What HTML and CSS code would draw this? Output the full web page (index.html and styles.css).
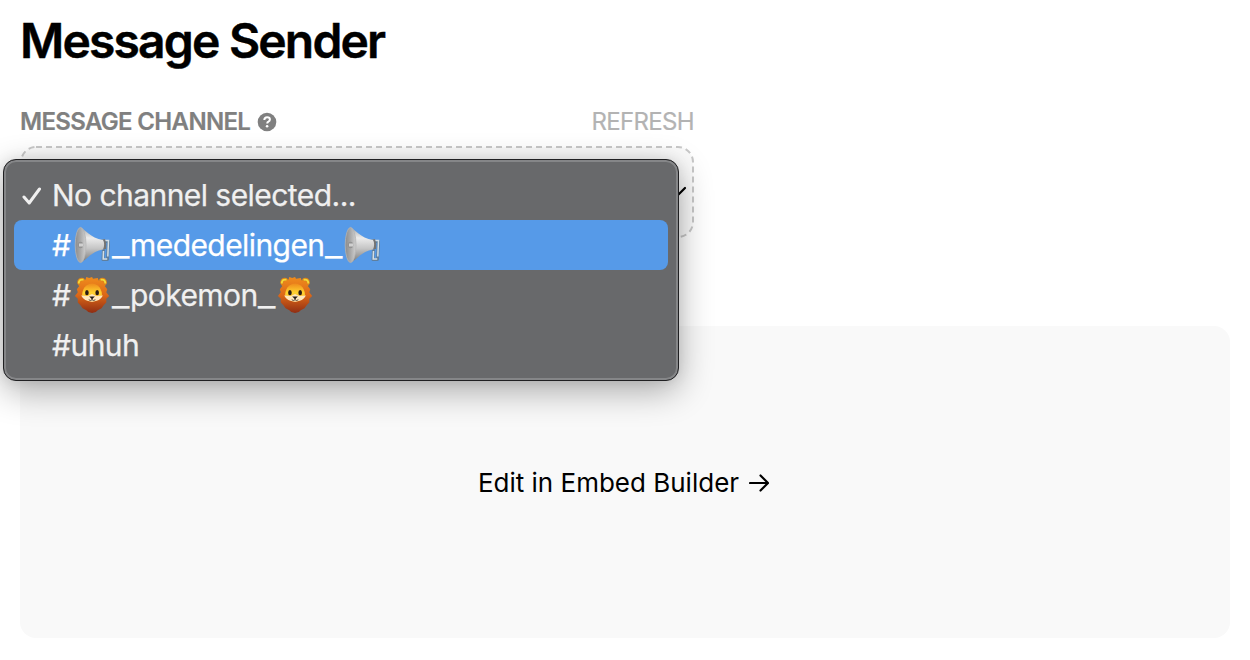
FILE: index.html
```html
<!DOCTYPE html>
<html lang="en">
<head>
<meta charset="utf-8">
<title>Message Sender</title>
<link rel="stylesheet" href="styles.css">
</head>
<body>
<svg class="defs" width="0" height="0" aria-hidden="true">
  <defs>
    <linearGradient id="horn" x1="0" y1="0" x2="0" y2="1"><stop offset="0" stop-color="#a5a5a5"/><stop offset=".3" stop-color="#ececec"/><stop offset=".6" stop-color="#c5c5c5"/><stop offset="1" stop-color="#777"/></linearGradient>
    <linearGradient id="bell" x1="0" y1="0" x2="1" y2="0"><stop offset="0" stop-color="#8b8b8b"/><stop offset=".5" stop-color="#aaa"/><stop offset="1" stop-color="#d0d0d0"/></linearGradient>
    <linearGradient id="mane" x1="0" y1="0" x2="0" y2="1"><stop offset="0" stop-color="#f08c1c"/><stop offset=".5" stop-color="#dc6818"/><stop offset="1" stop-color="#8f2d13"/></linearGradient>
    <linearGradient id="face" x1="0" y1="0" x2="0" y2="1"><stop offset="0" stop-color="#ee8a1c"/><stop offset=".5" stop-color="#ffd22f"/><stop offset="1" stop-color="#f6a62b"/></linearGradient>
    <symbol id="megaphone" viewBox="0 0 38 38">
      <path d="M27 15.500h7.500l-1 18h-4.500l.5-10" fill="none" stroke="#5f7f9d" stroke-width="3" stroke-linejoin="round"/>
      <path d="M28 14.500h6.500l-.7 16M29.500 25l-.3 8h4" fill="none" stroke="#d3dfe7" stroke-width="1.500"/>
      <path d="M24 14.500l7-1.500q2 4.500 1 10l-8 1z" fill="#747474"/>
      <path d="M6 1.500C11 3 16 12 29 14c1.500 2.500 1.500 6 0 9.500C17 25 12 35 6.500 36.500z" fill="url(#horn)"/>
      <ellipse cx="6.600" cy="19" rx="5.400" ry="17.600" fill="url(#bell)" stroke="#b4b4b4" stroke-width=".8"/>
      <ellipse cx="6.500" cy="19" rx="2.600" ry="3.300" fill="#929292"/>
      <path d="M5 17.500h4v3h-4z" fill="#d0d0d0"/>
    </symbol>
    <symbol id="lion" viewBox="0 0 40 40">
      <circle cx="8" cy="6.500" r="4.600" fill="#dd8119"/><circle cx="30" cy="6.500" r="4.600" fill="#dd8119"/>
      <path d="M16 2l3-1 1 2 5-1 1 3 5 1 1 4 3 4-1 3 3 4-3 3 0 4-3 3-2 3-4 2-2 2-4 1-4-1-2-2-4-2-2-3-3-3 0-4-3-3 3-4-1-3 3-4 1-4 5-2 1-3z" fill="url(#mane)"/>
      <path d="M5 8q0-5 5-4M33 8q0-5-5-4" stroke="#f2da39" stroke-width="2" fill="none"/>
      <path d="M13 10q6-4 12 0 4 3 4.500 10-1.500 6-10.500 7-9-1-10.500-7Q9 13 13 10" fill="url(#face)"/>
      <path d="M7.500 20.500l7 .5 4.500-2 4.500 2 7-.5q-3 6-11.500 6.500-8.500-.5-11.500-6.500" fill="#ffe7bd"/>
      <ellipse cx="13.600" cy="17.500" rx="1.900" ry="2.700" fill="#291b14"/><ellipse cx="24.400" cy="17.500" rx="1.900" ry="2.700" fill="#291b14"/>
      <path d="M16 21.500h6l-3 3z" fill="#211a18"/><path d="M19 23v2M15.500 25q2 1.500 3.500 0 1.500 1.500 3.500 0" fill="none" stroke="#211a18" stroke-width=".8"/>
    </symbol>
  </defs>
</svg>
<main class="page">
  <h1 class="title">Message Sender</h1>
  <section class="field">
    <div class="field-head">
      <span class="label">MESSAGE CHANNEL</span>
      <svg class="help" viewBox="0 0 20 20"><circle cx="10" cy="10" r="9.300" fill="#808080"/><path d="M7.300 8Q7.500 5.300 10.100 5.300 12.900 5.300 12.900 7.600q0 1.300-1.500 2.100-1.200.6-1.200 1.800" fill="none" stroke="#fff" stroke-width="2"/><circle cx="10.100" cy="14.200" r="1.300" fill="#fff"/></svg>
      <span class="refresh">REFRESH</span>
    </div>
    <div class="select">
      <svg class="dash" width="674" height="92"><rect x="1" y="1" width="672" height="90" rx="15"/></svg>
      <svg class="chevron" viewBox="0 0 20 12"><path d="M2 2l8 8 8-8"/></svg>
      <div class="menu">
        <div class="option"><svg class="check" viewBox="0 0 20 20"><path d="M2 12L7.200 18 17.500 4"/></svg><span>No channel selected...</span></div>
        <div class="option active"><span class="hash">#</span><svg class="emoji"><use href="#megaphone"/></svg><span class="bar">_</span><span class="word">mededelingen</span><span class="bar">_</span><svg class="emoji last"><use href="#megaphone"/></svg></div>
        <div class="option"><span class="hash">#</span><svg class="emoji"><use href="#lion"/></svg><span class="bar">_</span><span class="word">pokemon</span><span class="bar">_</span><svg class="emoji last"><use href="#lion"/></svg></div>
        <div class="option"><span>#uhuh</span></div>
      </div>
    </div>
  </section>
  <section class="embed"><span>Edit in Embed Builder</span><svg class="arrow" viewBox="0 0 20 18"><path d="M1 9h18M11.500 1.500L19 9l-7.500 7.500"/></svg></section>
</main>
</body>
</html>
```

FILE: styles.css
```css
* { box-sizing: border-box; }
body { margin: 0; background: #fff; color: #000; font-family: Inter, "Liberation Sans", sans-serif; overflow: hidden; }
.defs { position: absolute; }
.page { height: 660px; padding: 11px 20px 0; }
.title { margin: 0; font-size: 48px; line-height: 60px; font-weight: 600; letter-spacing: -1.82px; -webkit-text-stroke: .45px #000; white-space: nowrap; }
.field { width: 674px; margin-top: 35px; }
.field-head { display: flex; align-items: center; height: 32px; font-size: 24px; line-height: 32px; letter-spacing: -.67px; }
.label { color: #808080; font-weight: 600; -webkit-text-stroke: .2px #808080; }
.help { width: 20px; height: 20px; margin-left: 7px; }
.refresh { margin-left: auto; color: #b3b3b3; -webkit-text-stroke: .2px #b3b3b3; }
.select { position: relative; display: flex; align-items: center; justify-content: flex-end; width: 674px; height: 92px; margin-top: 8px; padding-right: 7px; }
.dash { position: absolute; inset: 0; }
.dash rect { fill: #fafafa; stroke: #c8c8c8; stroke-width: 2; stroke-dasharray: 6 4; }
.chevron { position: relative; width: 20px; height: 12px; fill: none; stroke: #000; stroke-width: 2.2; stroke-linecap: round; }
.menu { position: absolute; z-index: 1; left: -17px; top: 13px; width: 676px; height: 222px; padding: 9px 9px; border: 1px solid #202022; border-radius: 13px; background: #68696b; color: #f0f0f0; box-shadow: inset 0 0 0 2px #858688, 0 10px 34px rgba(0,0,0,.32), 0 0 14px rgba(0,0,0,.08); font-size: 30px; letter-spacing: -.55px; -webkit-text-stroke: .25px currentColor; }
.option { display: flex; align-items: center; height: 50px; margin: 0 1px; padding-left: 38px; border-radius: 8px; line-height: 50px; white-space: nowrap; }
.menu .option:first-child { padding-left: 8px; margin-top: 1px; }
.active { background: #569ae8; color: #fff; }
.check { width: 20px; height: 20px; margin-right: 10px; fill: none; stroke: #f0f0f0; stroke-width: 3; stroke-linecap: round; stroke-linejoin: round; }
.hash { width: 22px; }
.emoji { width: 38px; height: 38px; flex: none; -webkit-text-stroke: 0; }
.last { margin-left: 1.5px; }
.bar { width: 18px; letter-spacing: 0; transform: scaleX(1.27); transform-origin: left; }
.word { letter-spacing: -.57px; }
.embed { display: flex; justify-content: center; align-items: center; width: 1210px; height: 312px; margin-top: 88px; padding: 0 3px 0 0; border-radius: 16px; background: #f9f9f9; font-size: 26px; }
.arrow { width: 20px; height: 18px; margin: 2px 0 0 10px; fill: none; stroke: #000; stroke-width: 2.2; stroke-linecap: round; stroke-linejoin: round; }
```
